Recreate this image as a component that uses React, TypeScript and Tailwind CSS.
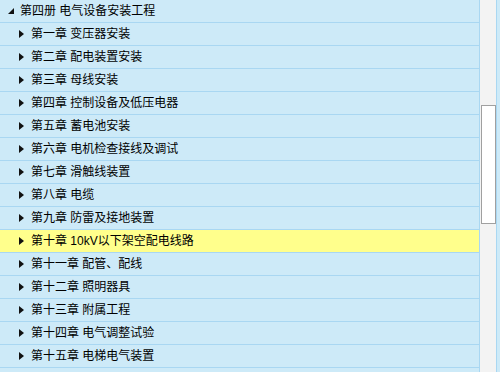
const chapters = [
  '第一章 变压器安装',
  '第二章 配电装置安装',
  '第三章 母线安装',
  '第四章 控制设备及低压电器',
  '第五章 蓄电池安装',
  '第六章 电机检查接线及调试',
  '第七章 滑触线装置',
  '第八章 电缆',
  '第九章 防雷及接地装置',
  '第十章 10kV以下架空配电线路',
  '第十一章 配管、配线',
  '第十二章 照明器具',
  '第十三章 附属工程',
  '第十四章 电气调整试验',
  '第十五章 电梯电气装置',
];

const SELECTED = 9;

export default function App() {
  return (
    <div
      className="flex h-[372px] w-[500px] overflow-hidden bg-[#cdeaf8] text-[12px] text-black"
      style={{ fontFamily: '"Liberation Sans", "Noto Sans CJK SC", sans-serif' }}
    >
      {/* Tree */}
      <div className="w-[480px] shrink-0 border-r border-[#a9d7f2]">
        <div className="flex h-[23px] items-center border-b border-[#a9d7f2] pl-[8px]">
          <svg width="6" height="6" viewBox="0 0 6 6" className="mr-[6px]">
            <polygon points="6,0 6,6 0,6" fill="#111" />
          </svg>
          <span className="leading-none">第四册 电气设备安装工程</span>
        </div>
        {chapters.map((c, i) => (
          <div key={c} className="border-b border-[#a9d7f2]">
            <div
              className={`flex h-[22px] items-center pl-[19px] ${
                i === SELECTED ? 'bg-[#ffff8c]' : ''
              }`}
            >
              <svg width="5" height="8" viewBox="0 0 5 8" className="mr-[7px]">
                <polygon points="0,0 5,4 0,8" fill="#111" />
              </svg>
              <span className="leading-none">{c}</span>
            </div>
          </div>
        ))}
      </div>

      {/* Scrollbar */}
      <div className="w-[17px] shrink-0 border-r border-[#a9d7f2] bg-[#f3f3f3] pt-[105px] pl-[1px]">
        <div className="h-[119px] w-[15px] border border-[#a0a0a0] bg-white" />
      </div>
    </div>
  );
}
